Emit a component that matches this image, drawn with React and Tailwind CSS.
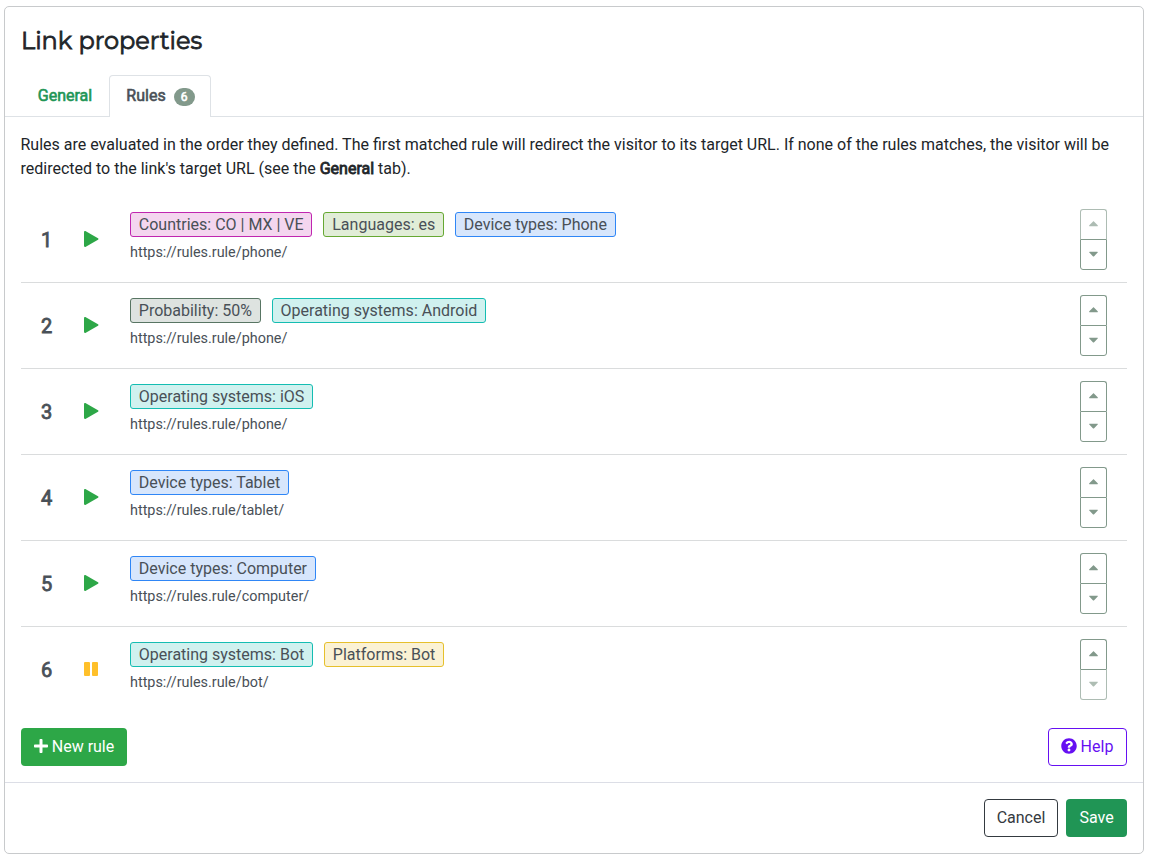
import React, { useState } from 'react';
import { FaCaretDown, FaCaretUp, FaPlus, FaQuestionCircle } from 'react-icons/fa';

const tagStyles = {
  country: 'border-[#c026b0] bg-[#f4d6ef]',
  language: 'border-[#66a832] bg-[#e1edd7]',
  device: 'border-[#2f86f6] bg-[#d7e6fc]',
  probability: 'border-[#587563] bg-[#dee3e0]',
  os: 'border-[#14bdb2] bg-[#d0f1ef]',
  platform: 'border-[#e6c02c] bg-[#fbf2d4]',
};

const initialRules = [
  {
    id: 1,
    active: true,
    url: 'https://rules.rule/phone/',
    tags: [
      { type: 'country', label: 'Countries: CO | MX | VE' },
      { type: 'language', label: 'Languages: es' },
      { type: 'device', label: 'Device types: Phone' },
    ],
  },
  {
    id: 2,
    active: true,
    url: 'https://rules.rule/phone/',
    tags: [
      { type: 'probability', label: 'Probability: 50%' },
      { type: 'os', label: 'Operating systems: Android' },
    ],
  },
  {
    id: 3,
    active: true,
    url: 'https://rules.rule/phone/',
    tags: [{ type: 'os', label: 'Operating systems: iOS' }],
  },
  {
    id: 4,
    active: true,
    url: 'https://rules.rule/tablet/',
    tags: [{ type: 'device', label: 'Device types: Tablet' }],
  },
  {
    id: 5,
    active: true,
    url: 'https://rules.rule/computer/',
    tags: [{ type: 'device', label: 'Device types: Computer' }],
  },
  {
    id: 6,
    active: false,
    url: 'https://rules.rule/bot/',
    tags: [
      { type: 'os', label: 'Operating systems: Bot' },
      { type: 'platform', label: 'Platforms: Bot' },
    ],
  },
];

const PlayIcon = () => (
  <svg width="15" height="16" viewBox="0 0 15 16" className="text-[#2da747]" fill="currentColor">
    <path d="M0 1.2C0 .2.9-.3 1.8.2L14 7.2c.6.4.6 1.2 0 1.6L1.8 15.8c-.9.5-1.8 0-1.8-1z" />
  </svg>
);

const PauseIcon = () => (
  <svg width="15" height="16" viewBox="0 0 15 16" className="text-[#ffc02a]" fill="currentColor">
    <rect x="0" y="1" width="6" height="14" rx="1" />
    <rect x="8" y="1" width="6" height="14" rx="1" />
  </svg>
);

const OrderButtons = ({ isFirst, isLast, onMove }) => (
  <div className="flex w-[27px] flex-col text-[#82998b]">
    <button
      type="button"
      aria-label="Move up"
      disabled={isFirst}
      onClick={() => onMove(-1)}
      className="flex h-[30px] items-center justify-center rounded-t-[3px] border border-b-0 border-[#82998b] pb-0.5 disabled:opacity-65"
    >
      <FaCaretUp size={15} />
    </button>
    <button
      type="button"
      aria-label="Move down"
      disabled={isLast}
      onClick={() => onMove(1)}
      className={`flex h-[31px] items-center justify-center rounded-b-[3px] border pb-0.5 ${isLast ? 'border-[#82998b]/65 border-t-[#82998b] text-[#82998b]/65' : 'border-[#82998b]'}`}
    >
      <FaCaretDown size={15} />
    </button>
  </div>
);

const RuleRow = ({ rule, index, count, onMove }) => (
  <li className="flex h-[86px] border-b border-[#dadcdd] pt-3 pr-5 text-[#495057] last:border-b-0">
    <div className="flex h-[60px] w-[63px] items-center pt-0.5 pl-5 text-xl [-webkit-text-stroke:0.8px]">
      {index + 1}
    </div>
    <div className="flex h-[60px] w-[46px] items-center">
      {rule.active ? <PlayIcon /> : <PauseIcon />}
    </div>
    <div className="flex-1 pt-[3px]">
      <div className="flex gap-[11px]">
        {rule.tags.map((tag) => (
          <span
            key={tag.label}
            className={`h-[25px] rounded-[3px] border px-[7.8px] text-base leading-[23px] ${tagStyles[tag.type]}`}
          >
            {tag.label}
          </span>
        ))}
      </div>
      <div className="mt-[5px] text-[14.4px] leading-[21px]">{rule.url}</div>
    </div>
    <OrderButtons isFirst={index === 0} isLast={index === count - 1} onMove={onMove} />
  </li>
);

export default function App() {
  const [rules, setRules] = useState(initialRules);

  const moveRule = (index, step) => {
    const next = [...rules];
    const [rule] = next.splice(index, 1);
    next.splice(index + step, 0, rule);
    setRules(next);
  };

  return (
    <div className="h-[860px] bg-white px-1 pt-1.5 font-[Roboto,sans-serif] text-base text-[#212529]">
      <section className="flex h-[848px] w-[1140px] flex-col rounded-[5px] border border-[#c8cacc]">
        <h1 className="px-4 pt-[19px] pb-[19px] font-[Montserrat,Inter,sans-serif] text-2xl leading-[30px] [-webkit-text-stroke:0.8px]">
          Link properties
        </h1>

        <nav className="flex h-[42px] border-b border-[#dee2e6] px-4 [-webkit-text-stroke:0.6px]">
          <button type="button" className="w-[88px] pt-px text-[#209555]">
            General
          </button>
          <button
            type="button"
            className="-mb-px flex w-[102px] items-center justify-center gap-2 rounded-t-[4px] border border-b-0 border-[#dee2e6] bg-white pl-px text-[#495057]"
          >
            <span className="pb-0.5">Rules</span>
            <span className="flex h-[18px] w-[21px] items-center justify-center rounded-full bg-[#82998b] text-xs text-white">
              {rules.length}
            </span>
          </button>
        </nav>

        <div className="flex flex-1 flex-col px-4 pt-4">
          <p className="-ml-[0.5px] leading-6">
            Rules are evaluated in the order they defined. The first matched rule will redirect the
            visitor to its target URL. If none of the rules matches, the visitor will be redirected
            to the link's target URL (see the{' '}
            <strong className="font-normal [-webkit-text-stroke:0.8px]">General</strong> tab).
          </p>

          <ul className="mt-4">
            {rules.map((rule, index) => (
              <RuleRow
                key={rule.id}
                rule={rule}
                index={index}
                count={rules.length}
                onMove={(step) => moveRule(index, step)}
              />
            ))}
          </ul>

          <div className="mt-[15px] flex justify-between">
            <button
              type="button"
              className="flex h-[38px] w-[106px] items-center justify-center gap-1 rounded-[4px] bg-[#2da747] text-white"
            >
              <FaPlus className="-mt-0.5 h-4 w-3.5" />
              New rule
            </button>
            <button
              type="button"
              className="flex h-[38px] w-[79px] items-center justify-center gap-1 rounded-[4px] border border-[#6610f2] pr-px text-[#6610f2]"
            >
              <FaQuestionCircle size={16} className="-mt-0.5" />
              Help
            </button>
          </div>
        </div>

        <footer className="flex h-[71px] justify-end gap-2 border-t border-[#dcdee6] px-4 pt-4">
          <button
            type="button"
            className="h-[38px] w-[74px] rounded-[4px] border border-[#343a40] text-[#343a40]"
          >
            Cancel
          </button>
          <button
            type="button"
            className="h-[38px] w-[61px] rounded-[4px] bg-[#209555] text-white"
          >
            Save
          </button>
        </footer>
      </section>
    </div>
  );
}
